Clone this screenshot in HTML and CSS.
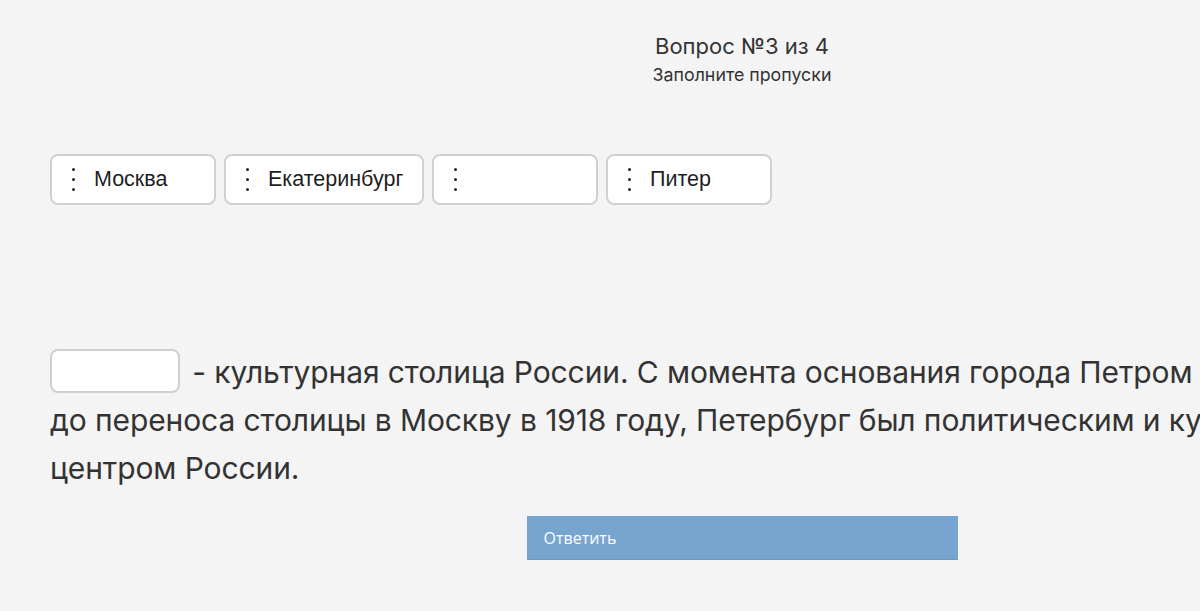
FILE: index.html
```html
<!DOCTYPE html>
<html lang="ru">
<head>
<meta charset="utf-8">
<link rel="stylesheet" href="styles.css">
</head>
<body>
<div class="page">
  <header class="head">
    <div class="title">Вопрос №3 из 4</div>
    <div class="subtitle">Заполните пропуски</div>
  </header>
  <div class="chips">
    <div class="chip w166"><span class="grip"><i></i><i></i><i></i></span><span>Москва</span></div>
    <div class="chip w200"><span class="grip"><i></i><i></i><i></i></span><span>Екатеринбург</span></div>
    <div class="chip w166"><span class="grip"><i></i><i></i><i></i></span><span></span></div>
    <div class="chip w166"><span class="grip"><i></i><i></i><i></i></span><span>Питер</span></div>
  </div>
  <p class="sentence"><span class="blank"></span> - культурная столица России. С момента основания города Петром I<br>до переноса столицы в Москву в 1918 году, Петербург был политическим и культурным<br>центром России.</p>
  <div class="actions">
    <button class="answer">Ответить</button>
  </div>
</div>
</body>
</html>
```
FILE: styles.css
```css
html, body {
  margin: 0;
  padding: 0;
  background: #f4f4f4;
  overflow: hidden;
  height: 611px;
}
.page {
  width: 1384px;
  margin-left: 50px;
  font-family: Inter, "Noto Sans", sans-serif;
  color: #333;
}
.head {
  text-align: center;
  padding-top: 32px;
}
.title {
  font-size: 22px;
  line-height: 28px;
  color: #333;
}
.subtitle {
  font-size: 17.8px;
  line-height: 24px;
  margin-top: 3px;
  color: #333;
}
.chips {
  display: flex;
  gap: 8px;
  margin-top: 67px;
}
.chip {
  box-sizing: border-box;
  height: 51px;
  background: #fff;
  border: 2px solid #d0d0d0;
  border-radius: 8px;
  display: flex;
  align-items: center;
  font-family: "Liberation Sans", Arial, sans-serif;
  font-size: 21.5px;
  color: #1e1e1e;
}
.w166 { width: 166px; }
.w200 { width: 200px; }
.grip {
  display: flex;
  flex-direction: column;
  justify-content: space-between;
  height: 23px;
  width: 3px;
  margin-left: 20px;
  margin-right: 19px;
}
.grip i {
  display: block;
  width: 3px;
  height: 3px;
  border-radius: 50%;
  background: #222;
}
.sentence {
  margin: 143px 0 0 0;
  font-size: 30px;
  line-height: 48px;
  color: #333;
  letter-spacing: -0.1px;
  white-space: nowrap;
}
.blank {
  display: inline-block;
  box-sizing: border-box;
  width: 130px;
  height: 44px;
  background: #fff;
  border: 2px solid #d0d0d0;
  border-radius: 8px;
  vertical-align: -10px;
  margin-right: 4px;
}
.actions {
  display: flex;
  justify-content: center;
  margin-top: 24px;
}
.answer {
  width: 431px;
  height: 44px;
  border: none;
  border-bottom: 1px solid #6e97c0;
  background: #78a5cf;
  color: #fff;
  font-family: "Open Sans", sans-serif;
  font-size: 16px;
  text-align: left;
  padding: 0 17px;
  cursor: pointer;
}
```
